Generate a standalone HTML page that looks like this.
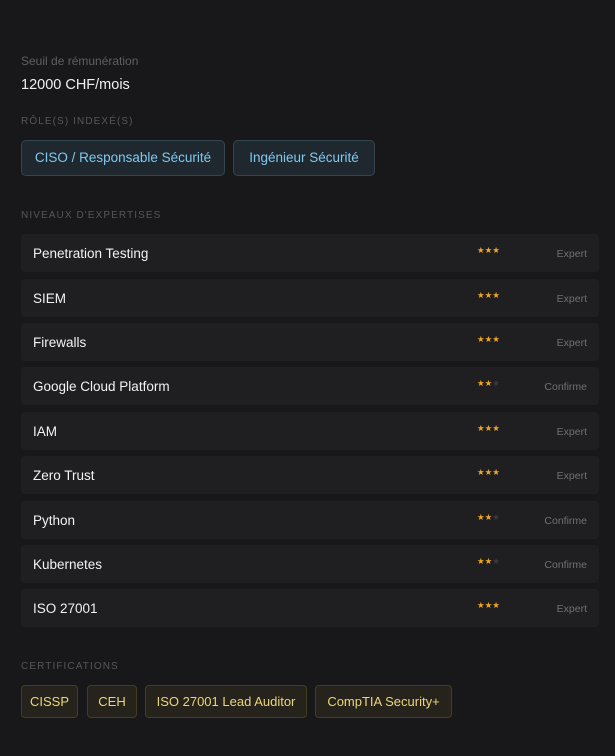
<!DOCTYPE html>
<html><head><meta charset="utf-8"><style>
*{box-sizing:border-box;margin:0;padding:0}
html,body{width:615px;height:756px;background:#18181a;font-family:"Liberation Sans",sans-serif;overflow:hidden}
.lbl{position:absolute;left:21px;top:54px;font-size:12px;color:#5f5f63}
.val{position:absolute;left:21px;top:77px;font-size:14.5px;color:#f0f0f0}
.h{position:absolute;left:21px;font-size:10px;letter-spacing:1.1px;color:#56565b}
.chip{position:absolute;height:36px;border-radius:5px;background:#1f282f;border:1px solid #35454f;color:#7fc9f0;font-size:13.5px;line-height:34px;text-align:center}
.row{position:absolute;left:21px;width:578px;height:38px;background:#1f1f21;border-radius:4px}
.row .n{position:absolute;left:12px;top:12px;font-size:13.5px;color:#f2f2f2}
.row .s{position:absolute;left:456px;top:11px;font-size:8.5px;color:#f2a623;letter-spacing:0}
.row .s i{font-style:normal;color:#3a3a40}
.row .l{position:absolute;right:12px;top:14px;font-size:10.5px;color:#707075}
.cert{position:absolute;top:685px;height:33px;border-radius:4px;background:#25231b;border:1px solid #453e20;color:#ecd57a;font-size:13px;line-height:31px;text-align:center}
</style></head><body>
<div class="lbl">Seuil de rémunération</div>
<div class="val">12000 CHF/mois</div>
<div class="h" style="top:116px">RÔLE(S) INDEXÉ(S)</div>
<div class="chip" style="left:21px;top:140px;width:204px">CISO / Responsable Sécurité</div>
<div class="chip" style="left:233px;top:140px;width:142px">Ingénieur Sécurité</div>
<div class="h" style="top:210px">NIVEAUX D'EXPERTISES</div>

<div class="row" style="top:234px"><span class="n">Penetration Testing</span><span class="s">★★★</span><span class="l">Expert</span></div>
<div class="row" style="top:279px"><span class="n">SIEM</span><span class="s">★★★</span><span class="l">Expert</span></div>
<div class="row" style="top:323px"><span class="n">Firewalls</span><span class="s">★★★</span><span class="l">Expert</span></div>
<div class="row" style="top:367px"><span class="n">Google Cloud Platform</span><span class="s">★★<i>★</i></span><span class="l">Confirme</span></div>
<div class="row" style="top:412px"><span class="n">IAM</span><span class="s">★★★</span><span class="l">Expert</span></div>
<div class="row" style="top:456px"><span class="n">Zero Trust</span><span class="s">★★★</span><span class="l">Expert</span></div>
<div class="row" style="top:501px"><span class="n">Python</span><span class="s">★★<i>★</i></span><span class="l">Confirme</span></div>
<div class="row" style="top:545px"><span class="n">Kubernetes</span><span class="s">★★<i>★</i></span><span class="l">Confirme</span></div>
<div class="row" style="top:589px"><span class="n">ISO 27001</span><span class="s">★★★</span><span class="l">Expert</span></div>

<div class="h" style="top:661px">CERTIFICATIONS</div>
<div class="cert" style="left:21px;width:57px">CISSP</div>
<div class="cert" style="left:87px;width:50px">CEH</div>
<div class="cert" style="left:145px;width:162px">ISO 27001 Lead Auditor</div>
<div class="cert" style="left:315px;width:137px">CompTIA Security+</div>
</body></html>
